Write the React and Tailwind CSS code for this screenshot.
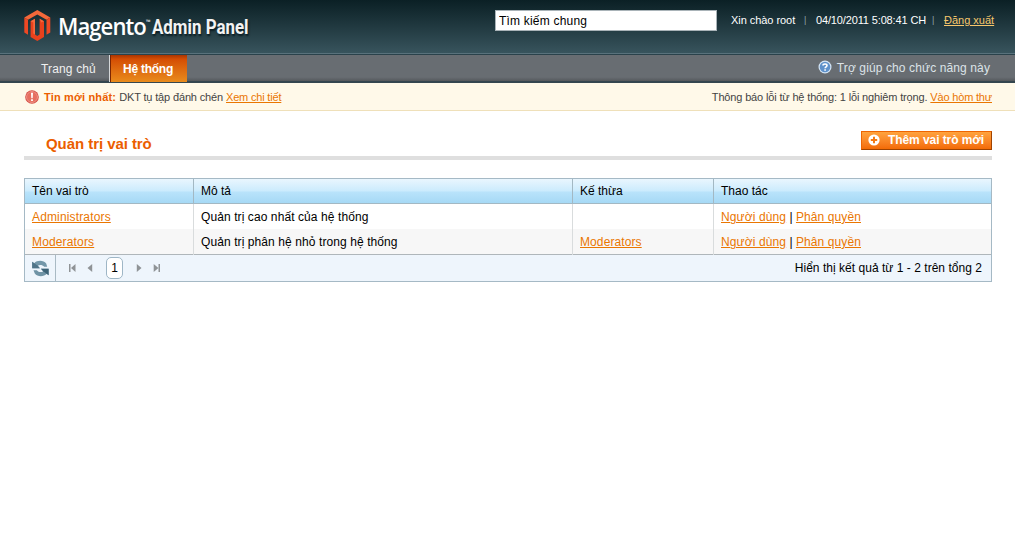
const link = "underline text-[#ea7601]";

function Logo() {
  return (
    <div className="flex h-[53px] items-start pl-6">
      <svg width="27" height="32" viewBox="0 0 27 32" className="mt-[10px]">
        <path d="M13.3 0 26.3 7.500 22.500 9.700 13.300 4.400 4 9.700.3 7.500z" fill="#f4683a" />
        <path d="M.3 7.500 4 9.700v15L.3 22.500zM22.500 9.700l3.800-2.200v15l-3.800 2.200z" fill="#ee4824" />
        <path d="M6.600 11.200 11 8.800v15.800l2.300 1.500 2.300-1.500V8.800l4.400 2.400v15.900L13.300 31 6.600 27.100z" fill="#e9411c" />
        <path d="m6.600 11.200 4.400-2.400v15.800l-1.700-1V12.500zM15.600 8.800l4.400 2.400-2.700 1.300z" fill="#f5693c" />
      </svg>
      <div className="ml-[7px] mt-[10px] w-[88px] origin-left scale-x-[0.94] whitespace-nowrap font-['Open_Sans'] text-[23.500px] font-semibold leading-[32px] tracking-[-1px] text-white">
        Magento
      </div>
      <div className="mt-[18px] w-[6px] font-['Open_Sans'] text-[6px] leading-[8px] text-white">™</div>
      <div className="mt-[14px] origin-left scale-x-[0.845] whitespace-nowrap font-['Roboto',sans-serif] text-[20px] font-bold leading-[26px] text-[#f3f3f3] [text-shadow:1px_2px_2px_#0a1c22]">
        Admin Panel
      </div>
    </div>
  );
}

function Header() {
  return (
    <header className="flex h-[54px] border-b border-[#59727c] bg-linear-to-b from-[#0b2025] to-[#38545d]">
      <div className="w-[495px]"><Logo /></div>
      <input
        readOnly
        value="Tìm kiếm chung"
        className="mt-[10px] h-[21px] w-[222px] border border-[#a9b3b8] bg-white px-[3px] text-[12px] tracking-[0.2px] text-black outline-none"
      />
      <div className="mt-[13px] flex whitespace-nowrap text-[11px] leading-[15px] text-white">
        <span className="ml-[14px] w-[73px] tracking-[-0.05px]">Xin chào root</span>
        <span className="w-[12px] text-[9px] text-[#91a1a7]">|</span>
        <span className="w-[116px] tracking-[-0.14px]">04/10/2011 5:08:41 CH</span>
        <span className="w-[12px] text-[9px] text-[#91a1a7]">|</span>
        <a className="text-[#f7c76c] underline">Đăng xuất</a>
      </div>
    </header>
  );
}

function HelpIcon() {
  return (
    <svg width="14" height="14" viewBox="0 0 14 14" className="mt-[5px]">
      <circle cx="7" cy="7" r="6.5" fill="#d5e6f6" />
      <circle cx="7" cy="7" r="5.3" fill="#5f92cb" />
      <path d="M5 5.500C5 3.500 9 3.500 9 5.500 9 6.900 7.100 6.800 7.100 8.300M7.100 9.300v1.500" fill="none" stroke="#fff" strokeWidth="1.600" />
    </svg>
  );
}

function Nav() {
  return (
    <nav className="flex h-[29px] justify-between border-b-2 border-t border-b-[#34464f] border-t-[#2a424b] bg-linear-to-b from-[#686d72] from-85% to-[#55595d] text-[12px] leading-[28px]">
      <div className="flex pl-[41px]">
        <a className="w-[68px] tracking-[0.15px] text-[#f0f0f0]">Trang chủ</a>
        <a className="h-[27px] w-[78px] border-l border-[#d4d7d9] bg-linear-to-b from-[#a93502] via-[#d44d04] via-15% to-[#e98b1c] pl-[13px] font-bold tracking-[-0.25px] text-white shadow-[inset_1px_0_0_#7c2501]">Hệ thống</a>
      </div>
      <div className="flex gap-[5px] pr-[25px] tracking-[0.115px] text-[#dce3e8]">
        <HelpIcon />
        <span className="leading-[26px]">Trợ giúp cho chức năng này</span>
      </div>
    </nav>
  );
}

function Notice() {
  return (
    <div className="flex h-[28px] justify-between border-b border-[#efe0b9] bg-[#fff9e9] pl-[25px] pr-[23px] text-[11px] leading-[28px] text-[#444]">
      <div className="flex">
        <svg width="14" height="14" viewBox="0 0 14 14" className="mr-[5px] mt-[7px]">
          <circle cx="7" cy="7" r="6.8" fill="#d44b42" />
          <circle cx="7" cy="7" r="5.5" fill="#e66f60" stroke="#f3a69d" strokeWidth="0.7" />
          <path d="M6 2.800h2L7.700 8.200H6.300zM6.100 9.200h1.800V11H6.100z" fill="#fff" />
        </svg>
        <b className="mr-[3px] tracking-[0.17px] text-[#eb5e00]">Tin mới nhất:</b>
        <span className="mr-[3px] tracking-[-0.15px]">DKT tụ tập đánh chén</span>
        <a className={link + " tracking-[-0.18px]"}>Xem chi tiết</a>
      </div>
      <div className="flex">
        <span className="mr-[3px] tracking-[-0.155px]">Thông báo lỗi từ hệ thống: 1 lỗi nghiêm trọng.</span>
        <a className={link + " tracking-[-0.18px]"}>Vào hòm thư</a>
      </div>
    </div>
  );
}

function TitleBar() {
  return (
    <div className="ml-[24px] mr-[23px] flex h-[49px] justify-between border-b-4 border-[#dfdfdf]">
      <h1 className="pl-[22px] pt-[24px] text-[15px] font-bold leading-[18px] tracking-[-0.06px] text-[#eb5e00]">Quản trị vai trò</h1>
      <button className="mt-[20px] flex h-[19px] w-[131px] border border-b-[#a04300] border-l-[#ed6502] border-r-[#a04300] border-t-[#ed6502] bg-linear-to-b from-[#ffa33d] to-[#f36b04] pl-[6px] text-[12px] font-bold leading-[16px] text-white">
        <svg width="12" height="12" viewBox="0 0 12 12" className="mr-[8px] mt-[2px]">
          <circle cx="6" cy="6" r="5.6" fill="#fff" />
          <path d="M6 2.800v6.400M2.800 6h6.400" stroke="#f47a14" strokeWidth="2" />
        </svg>
        <span className="whitespace-nowrap tracking-[-0.08px]">Thêm vai trò mới</span>
      </button>
    </div>
  );
}

const cols = "grid grid-cols-[168px_379px_141px_278px]";
const rows = [
  ["Administrators", "Quản trị cao nhất của hệ thống", ""],
  ["Moderators", "Quản trị phân hệ nhỏ trong hệ thống", "Moderators"],
];

function Pager() {
  return (
    <div className="flex h-[27px] justify-between border-t border-[#afb6ba] bg-[#eef5fc]">
      <div className="flex">
        <div className="w-[31px] border-r border-[#a9bac4] pl-[7px] pt-[5px]">
          <svg width="17" height="17" viewBox="0 0 17 17">
            <path d="M.2 1.800 2.200 3.200C5 .2 11.500-.2 14.200 3.600L15.200 6.800H12.200C10.500 4.600 7.500 4.400 5.800 5.800L7.900 8.300H.2z" fill="#7397a9" />
            <path d="M.2 1.800 5.800 5.800 7.900 8.300H.2z" fill="#4f7488" />
            <path d="M16.600 15.200 14.800 13.800C12 16.800 5.500 17.200 2.800 13.400L1.500 10.200H4.800C6.500 12.400 9.500 12.600 11.200 11.200L8.900 8.700H16.600z" fill="#6f93a5" />
            <path d="M16.600 15.200 11.200 11.200 8.900 8.700H16.600z" fill="#3d6377" />
          </svg>
        </div>
        <svg width="27" height="26" viewBox="0 0 27 26" className="ml-[10px]" fill="#8f9396">
          <path d="M3 9h1.500v8H3zM9.500 9v8L5 13zM26.200 9v8l-4.700-4z" />
        </svg>
        <span className="ml-[13px] mt-[2px] h-[22px] w-[17px] rounded-[5px] border border-[#9eb6c6] bg-white text-center text-[12px] leading-[21px]">1</span>
        <svg width="27" height="26" viewBox="0 0 27 26" className="ml-[12px]" fill="#8f9396">
          <path d="M1.800 9v8l4.700-4zM18.700 9v8l4.700-4zM23.500 9H25v8h-1.500z" />
        </svg>
      </div>
      <span className="pr-[9px] leading-[26px] tracking-[0.03px]">Hiển thị kết quả từ 1 - 2 trên tổng 2</span>
    </div>
  );
}

function RoleTable() {
  return (
    <section className="ml-[24px] mr-[23px] mt-[18px] h-[104px] border border-[#a5b9c5] text-[12px] text-black">
      <div className={cols + " h-[25px] border-b border-[#a3b8c3] bg-[linear-gradient(#e9f6fe_0%,#cbebfd_50%,#b9e3fb_54%,#a6d9f5_100%)] leading-[24px]"}>
        {["Tên vai trò", "Mô tả", "Kế thừa", "Thao tác"].map((h, i) => (
          <div key={h} className={i ? "border-l border-[#a3b8c3] pl-[7px]" : "pl-[7px]"}>{h}</div>
        ))}
      </div>
      {rows.map(([name, desc, parent], i) => (
        <div key={name} className={cols + " h-[25px] leading-[26px] " + (i ? "bg-[#f7f7f7]" : "bg-white")}>
          <div className="pl-[7px] tracking-[0.15px]"><a className={link}>{name}</a></div>
          <div className="border-l border-[#d9dcdd] pl-[7px] tracking-[0.09px]">{desc}</div>
          <div className="border-l border-[#d9dcdd] pl-[7px] tracking-[0.1px]"><a className={link}>{parent}</a></div>
          <div className="border-l border-[#d9dcdd] pl-[7px]">
            <a className={link + " tracking-[0.12px]"}>Người dùng</a> | <a className={link + " tracking-[0.1px]"}>Phân quyền</a>
          </div>
        </div>
      ))}
      <Pager />
    </section>
  );
}

export default function App() {
  return (
    <div className="h-[542px] w-[1015px] overflow-hidden bg-white font-['Liberation_Sans',Arial,sans-serif]">
      <Header />
      <Nav />
      <Notice />
      <TitleBar />
      <RoleTable />
    </div>
  );
}
